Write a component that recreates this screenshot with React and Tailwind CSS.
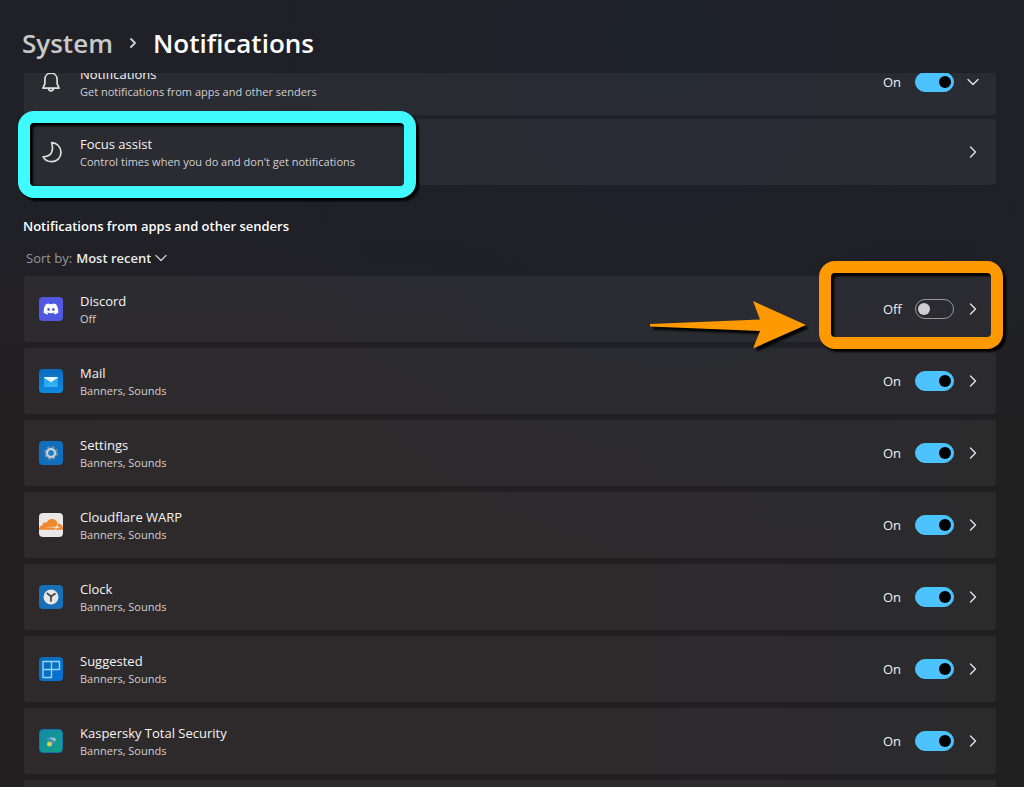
import { useState } from 'react';
import { ChevronDown, ChevronRight } from 'lucide-react';
import { FaCloudflare, FaDiscord } from 'react-icons/fa6';

const Tile = ({ className, children }) => (
    <span className={ `flex size-6 shrink-0 items-center justify-center overflow-hidden rounded-[4px] ${className}` }>
        { children }
    </span>
)

const BellIcon = () => (
    <svg viewBox="0 0 24 24" className="size-6 shrink-0" fill="none" stroke="#dededf" strokeWidth="1.7" strokeLinejoin="round" strokeLinecap="round">
        <path d="M12 3.2c-3.6 0-6.1 2.7-6.1 6.2v4.3L4 18.2h16l-1.9-4.5V9.4c0-3.5-2.5-6.2-6.1-6.2Z" />
        <path d="M9.4 18.4c.2 1.5 1.2 2.4 2.6 2.4s2.4-.9 2.6-2.4" />
    </svg>
)

const MoonIcon = () => (
    <svg viewBox="0 0 24 24" className="size-6 shrink-0" fill="none" stroke="#dededf" strokeWidth="1.7" strokeLinejoin="round">
        <path d="M12.6 2.6c5.2.2 9.4 4.3 9.4 9.7 0 5.4-4.2 9.4-9.4 9.4-3.6 0-6.7-1.8-8.6-4.8 4.6-.3 7.3-1.7 8.6-4.6 1.2-2.7 1.2-5.7 0-9.7Z" />
    </svg>
)

const MailIcon = () => (
    <Tile className="bg-linear-to-b from-[#0a6cc0] to-[#0d8be0]">
        <svg viewBox="0 0 24 24" className="size-6">
            <rect x="5" y="8" width="14" height="10" rx="1" fill="#2aa9ee" />
            <path d="M5 17.5 12 12l7 5.5c0 .3-.4.5-.8.5H5.8c-.4 0-.8-.2-.8-.5Z" fill="#35b2f1" />
            <path d="M5 8.7c0-.4.4-.7.8-.7h12.4c.4 0 .8.3.8.7L12 13.2Z" fill="#e6f5fd" />
        </svg>
    </Tile>
)

const SettingsIcon = () => (
    <Tile className="bg-[#0f6fbd]">
        <svg viewBox="0 0 24 24" className="size-6" fill="none">
            <circle cx="12" cy="12" r="6" stroke="#6f8ea8" strokeWidth="2" strokeDasharray="2.7 2" />
            <circle cx="12" cy="12" r="4" stroke="#c3ced6" strokeWidth="2.5" />
            <circle cx="12" cy="12" r="2.2" fill="#1680cf" />
        </svg>
    </Tile>
)

const ClockIcon = () => (
    <Tile className="bg-[#176fb8]">
        <svg viewBox="0 0 24 24" className="size-6">
            <circle cx="12" cy="12" r="7.5" fill="#e6e5e3" />
            <path d="M8.3 8.3 12 11.5l4-2.7M12 11.5V16" fill="none" stroke="#3b4147" strokeWidth="1.7" strokeLinecap="round" />
        </svg>
    </Tile>
)

const SuggestedIcon = () => (
    <Tile className="bg-linear-to-br from-[#0a6cb4] to-[#0a72d4]">
        <svg viewBox="0 0 24 24" className="size-6" fill="none" stroke="#8fd6fb" strokeWidth="1.4" strokeLinejoin="round">
            <path d="M4 4.5h16.5v8h-8v8H4Z" />
            <path d="M12.5 4.5v8H4" />
        </svg>
    </Tile>
)

const KasperskyIcon = () => (
    <Tile className="border border-[#0f74b0] bg-linear-to-br from-[#1489a8] to-[#16a184]">
        <svg viewBox="0 0 24 24" className="size-6 shrink-0">
            <path d="M7 10.5c1.5-2 4-3 6-2.8 2.6.2 4.5 1.5 4.5 1.5l-1.8 5.6c-1.5 1-3 .4-3.5-.8-.3-1.9-2.5-3-5.2-3.5Z" fill="#3d8fb0" />
            <path d="M10 9.2c2.5-1 5.5-.4 7 .6l-1 3c-1.3-1.6-3.4-2.8-6-3.6Z" fill="#9bc7d3" />
            <circle cx="10.5" cy="15" r="2.5" fill="#d2d35a" />
        </svg>
    </Tile>
)

const apps = [
    { name: "Mail", icon: <MailIcon /> },
    { name: "Settings", icon: <SettingsIcon /> },
    { name: "Cloudflare WARP", icon: <Tile className="bg-[#e9e8e6]"><FaCloudflare className="size-6 text-[#f0872c]" /></Tile> },
    { name: "Clock", icon: <ClockIcon /> },
    { name: "Suggested", icon: <SuggestedIcon /> },
    { name: "Kaspersky Total Security", icon: <KasperskyIcon /> },
]

const Card = ({ className = "", children }) => (
    <div className={ `relative flex h-[66px] shrink-0 items-center gap-[17px] rounded-[3px] bg-white/5 pr-[17px] pl-[15px] ${className}` }>
        { children }
    </div>
)

const Texts = ({ title, detail }) => (
    <div className="flex-1 pt-[2px]">
        <div className="text-[13px] leading-[17px] text-[#f5f5f5]">{ title }</div>
        <div className="text-[11px] leading-[17px] text-[#d0d0d2]">{ detail }</div>
    </div>
)

const Toggle = ({ name, on, onChange }) => (
    <label className="flex items-center text-[13px] text-[#f0f0f0]">
        <span className="w-8 pt-[2px]">{ on ? "On" : "Off" }</span>
        <input
            type="checkbox"
            role="switch"
            aria-label={ name }
            checked={ on }
            onChange={ (e) => onChange( e.target.checked ) }
            className="flex h-5 w-[39px] appearance-none items-center rounded-full border border-[#98989c] px-[2px] before:size-3 before:rounded-full before:bg-[#cfcfd1] checked:justify-end checked:border-[#4cc2ff] checked:bg-[#4cc2ff] checked:before:bg-black"
        />
    </label>
)

const Open = ({ label, down }) => (
    <button aria-label={ label } className="-mr-1 -ml-2 text-[#e4e4e6]">
        { down ? <ChevronDown className="size-5" strokeWidth={ 1.6 } /> : <ChevronRight className="size-5" strokeWidth={ 1.6 } /> }
    </button>
)

const AppRow = ({ name, icon, initial = true, className, children }) => {
    const [ on, setOn ] = useState(initial)

    return(
        <Card className={ className }>
            { icon }
            <Texts title={ name } detail={ on ? "Banners, Sounds" : "Off" } />
            <Toggle name={ name } on={ on } onChange={ setOn } />
            <Open label={ `${name} settings` } />
            { children }
        </Card>
    )
}

export default () => {
    const [ all, setAll ] = useState(true)

    return(
        <div className="flex h-screen flex-col overflow-hidden bg-[#201f21] bg-[radial-gradient(ellipse_at_65%_5%,#1d2129_0%,#1d212900_50%),linear-gradient(to_bottom,#202027_0%,#202027_28%,#20202700_55%),linear-gradient(to_right,#231f20,#221f21_60%,#202021)] font-['Open_Sans','Noto_Sans',sans-serif]">
            <header className="flex h-[73px] shrink-0 items-center gap-3 pt-3 pl-[22px] text-[26px] leading-8 font-semibold">
                <a href="#system" className="text-[#c9c9cb]">System</a>
                <ChevronRight className="size-4 text-[#c9c9cb]" strokeWidth={ 3 } />
                <h1 className="text-white">Notifications</h1>
            </header>
            <main className="flex-1 overflow-hidden pr-7 pl-6">
                <Card className="-mt-6">
                    <BellIcon />
                    <Texts title="Notifications" detail="Get notifications from apps and other senders" />
                    <Toggle name="Notifications" on={ all } onChange={ setAll } />
                    <Open label="Expand notifications" down />
                </Card>
                <Card className="mt-1">
                    <MoonIcon />
                    <Texts title="Focus assist" detail="Control times when you do and don't get notifications" />
                    <Open label="Focus assist" />
                    <div className="pointer-events-none absolute -top-2 -left-[6px] h-[87px] w-[398px] rounded-[16px] border-12 border-[#40fbfd] drop-shadow-[3px_3px_1px_#000]" />
                </Card>
                <h2 className="-ml-px mt-8 text-[13px] leading-[18px] font-semibold text-white">Notifications from apps and other senders</h2>
                <div className="mt-[13px] ml-[2px] flex items-center text-[13px] leading-[18px]">
                    <label htmlFor="sort" className="text-[#98989a]">Sort by:</label>
                    <select id="sort" className="ml-1 field-sizing-content appearance-none font-semibold text-[#ececec]">
                        <option>Most recent</option>
                        <option>Name</option>
                    </select>
                    <ChevronDown className="size-5 text-[#c9c9cb]" strokeWidth={ 1.6 } />
                </div>
                <div className="mt-2 flex flex-col gap-[6px]">
                    <AppRow name="Discord" initial={ false } className="z-10" icon={ <Tile className="bg-[#5059e0]"><FaDiscord className="size-4 text-white" /></Tile> }>
                        <svg viewBox="0 0 156 48" className="pointer-events-none absolute top-[25px] right-[190px] h-12 w-[156px] overflow-visible drop-shadow-[3px_3px_1px_#000]" fill="#ff9900">
                            <path d="M0 23 110 18.5 103 0l53 24-53 23.5 7-17.5L0 25.5Z" />
                        </svg>
                        <div className="pointer-events-none absolute -top-[15px] -right-[7px] h-[88px] w-[184px] rounded-[16px] border-12 border-[#ff9900] drop-shadow-[3px_3px_1px_#000]" />
                    </AppRow>
                    { apps.map( (app) => <AppRow key={ app.name } { ...app } /> ) }
                    <Card />
                </div>
            </main>
        </div>
    )
}
